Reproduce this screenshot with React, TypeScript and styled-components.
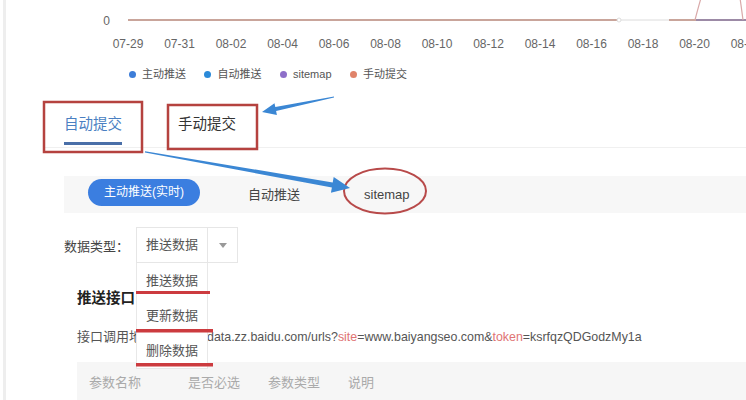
import styled, { createGlobalStyle } from "styled-components"

const GlobalStyle = createGlobalStyle`
  body {
    margin: 0;
    background: #fff;
    font-family: "Liberation Sans", "Noto Sans CJK SC", sans-serif;
  }
`

const Page = styled.div`
  position: relative;
  width: 746px;
  height: 400px;
  overflow: hidden;
  background: #fff;
`

const Frame = styled.div`
  margin-left: 3px;
  border-left: 3px solid #eeeeee;
  height: 400px;
  box-sizing: border-box;
`

const ChartRow = styled.div`
  display: flex;
  height: 28px;
`

const YAxis = styled.div`
  width: 122px;
  flex-shrink: 0;
  box-sizing: border-box;
  padding: 13px 18px 0 0;
  text-align: right;
  font-size: 12px;
  line-height: 16px;
  color: #666;
`

const AxisRow = styled.div`
  display: flex;
  margin-top: 8px;
  padding-left: 96.25px;
  overflow: hidden;
  white-space: nowrap;
`

const AxisTick = styled.div`
  flex-shrink: 0;
  width: 51.5px;
  text-align: center;
  font-size: 12px;
  line-height: 16px;
  color: #666;
`

const Legend = styled.div`
  display: flex;
  gap: 18px;
  margin-top: 14px;
  padding-left: 122.5px;
  font-size: 11px;
  line-height: 16px;
  color: #555;
`

const LegendItem = styled.div`
  display: flex;
  align-items: center;
  gap: 6.5px;
`

const Dot = styled.span<{ $color: string }>`
  width: 7px;
  height: 7px;
  border-radius: 50%;
  background: ${(p) => p.$color};
`

const TabBar = styled.div`
  display: flex;
  gap: 56px;
  margin: 32px 0 0 38px;
  padding: 0 0 2px 20px;
  border-bottom: 1px solid #f0f0f0;
`

const Tab = styled.div<{ $active?: boolean }>`
  font-size: 14.5px;
  line-height: 20px;
  padding-bottom: 8px;
  color: ${(p) => (p.$active ? "#4a7fc2" : "#333")};
  border-bottom: 3px solid ${(p) => (p.$active ? "#4a6fa8" : "transparent")};
`

const SubBar = styled.div`
  display: flex;
  align-items: center;
  gap: 32px;
  height: 37px;
  margin: 28px 0 0 58px;
  padding-left: 24px;
  background: #f7f7f7;
`

const SubTab = styled.div<{ $active?: boolean }>`
  height: 27px;
  padding: 0 16px;
  border-radius: 14px;
  line-height: 27px;
  font-size: ${(p) => (p.$active ? "12px" : "13px")};
  color: ${(p) => (p.$active ? "#fff" : "#444")};
  background: ${(p) => (p.$active ? "#3b7ee0" : "transparent")};
  margin-top: ${(p) => (p.$active ? "-5px" : "0")};
`

const FormRow = styled.div`
  display: flex;
  align-items: center;
  margin: 14px 0 0 58px;
`

const FieldLabel = styled.div`
  width: 72px;
  font-size: 13px;
  color: #444;
`

const Select = styled.div`
  position: relative;
  display: flex;
  width: 102px;
  height: 36px;
  box-sizing: border-box;
  border: 1px solid #e6e6e6;
`

const SelectValue = styled.div`
  width: 70px;
  padding-left: 9px;
  box-sizing: border-box;
  font-size: 13px;
  line-height: 34px;
  color: #555;
`

const CaretBox = styled.div`
  flex: 1;
  display: flex;
  align-items: center;
  justify-content: center;
  border-left: 1px solid #e6e6e6;
`

const Caret = styled.span`
  width: 0;
  height: 0;
  border-left: 4px solid transparent;
  border-right: 4px solid transparent;
  border-top: 5px solid #999;
`

const Menu = styled.div`
  position: absolute;
  top: 35px;
  left: -1px;
  width: 72px;
  box-sizing: border-box;
  background: #fff;
  border: 1px solid #e8e8e8;
  border-top: none;
  z-index: 2;
`

const MenuItem = styled.div`
  height: 35px;
  padding-left: 9px;
  font-size: 13px;
  line-height: 35px;
  color: #555;
`

const Section = styled.div`
  margin-left: 71px;
`

const Title = styled.div`
  margin-top: 24px;
  font-size: 14.5px;
  font-weight: bold;
  line-height: 22px;
  color: #222;
`

const UrlLine = styled.div`
  margin-top: 18px;
  font-size: 13px;
  line-height: 20px;
  color: #555;
  white-space: nowrap;
`

const UrlLabel = styled.span`
  margin-right: 8px;
`

const Url = styled.span`
  font-size: 12.4px;
`

const Param = styled.span`
  color: #e07474;
`

const TableHead = styled.div`
  display: grid;
  grid-template-columns: 99px 80px 80px 1fr;
  align-items: center;
  height: 38px;
  margin-top: 15px;
  padding-left: 12px;
  background: #f6f6f6;
  font-size: 13px;
  color: #aaa;
`

const Overlay = styled.svg`
  position: absolute;
  top: 0;
  left: 0;
  z-index: 5;
  pointer-events: none;
`

const ticks = ["07-29", "07-31", "08-02", "08-04", "08-06", "08-08", "08-10", "08-12", "08-14", "08-16", "08-18", "08-20", "08-22"]

const legend = [
  { label: "主动推送", color: "#3d7dd8" },
  { label: "自动推送", color: "#2b8ad9" },
  { label: "sitemap", color: "#8e6fc9" },
  { label: "手动提交", color: "#e0836a" },
]

function Plot() {
  return (
    <svg width="618" height="28" viewBox="0 0 618 28">
      <line x1="0" y1="20" x2="490" y2="20" stroke="#c9a59b" strokeWidth="2" />
      <line x1="490" y1="20" x2="541" y2="20" stroke="#dcdcdc" strokeWidth="1" />
      <circle cx="491" cy="20" r="2" fill="#fff" stroke="#ddd" strokeWidth="1" />
      <line x1="541" y1="20" x2="568" y2="20" stroke="#c9a59b" strokeWidth="2" />
      <line x1="568" y1="20" x2="618" y2="20" stroke="#9c8aa6" strokeWidth="2" />
      <path d="M567 20 C569 12 571 5 573 -2" stroke="#d9a9a9" strokeWidth="1.2" fill="none" />
      <path d="M615 20 C614 12 613 5 612 -2" stroke="#d9a9a9" strokeWidth="1.2" fill="none" />
    </svg>
  )
}

function Annotations() {
  return (
    <Overlay width="746" height="400" viewBox="0 0 746 400">
      <rect x="44" y="102" width="98" height="50" fill="none" stroke="#b5423f" strokeWidth="2.5" />
      <rect x="168" y="105" width="89" height="44" fill="none" stroke="#b5423f" strokeWidth="2.5" />
      <ellipse cx="385" cy="191" rx="41" ry="22.5" fill="none" stroke="#b84a4a" strokeWidth="2" />
      <polygon
        points="334,96.4 275.3,107.1 274.5,103.2 262,112 276.9,115 276.1,111.1 334,97.6"
        fill="#3b87d4"
      />
      <polygon
        points="144.9,152.6 331.9,187.4 330.9,192.8 350,188 333.7,177 332.7,182.4 145.1,151.2"
        fill="#3b87d4"
      />
      <rect x="136" y="291" width="74" height="3" fill="#cc3b3f" />
      <rect x="136" y="329" width="77" height="3.5" fill="#cc3b3f" />
      <rect x="136" y="363" width="77" height="3.5" fill="#cc3b3f" />
    </Overlay>
  )
}

export default function App() {
  return (
    <Page>
      <GlobalStyle />
      <Frame>
        <ChartRow>
          <YAxis>0</YAxis>
          <Plot />
        </ChartRow>
        <AxisRow>
          {ticks.map((t) => (
            <AxisTick key={t}>{t}</AxisTick>
          ))}
        </AxisRow>
        <Legend>
          {legend.map((l) => (
            <LegendItem key={l.label}>
              <Dot $color={l.color} />
              {l.label}
            </LegendItem>
          ))}
        </Legend>
        <TabBar>
          <Tab $active>自动提交</Tab>
          <Tab>手动提交</Tab>
        </TabBar>
        <SubBar>
          <SubTab $active>主动推送(实时)</SubTab>
          <SubTab>自动推送</SubTab>
          <SubTab>sitemap</SubTab>
        </SubBar>
        <FormRow>
          <FieldLabel>数据类型：</FieldLabel>
          <Select>
            <SelectValue>推送数据</SelectValue>
            <CaretBox>
              <Caret />
            </CaretBox>
            <Menu>
              <MenuItem>推送数据</MenuItem>
              <MenuItem>更新数据</MenuItem>
              <MenuItem>删除数据</MenuItem>
            </Menu>
          </Select>
        </FormRow>
        <Section>
          <Title>推送接口</Title>
          <UrlLine>
            <UrlLabel>接口调用地址：</UrlLabel>
            <Url>
              http://data.zz.baidu.com/urls?<Param>site</Param>=www.baiyangseo.com&amp;<Param>token</Param>=ksrfqzQDGodzMy1a
            </Url>
          </UrlLine>
          <TableHead>
            <span>参数名称</span>
            <span>是否必选</span>
            <span>参数类型</span>
            <span>说明</span>
          </TableHead>
        </Section>
      </Frame>
      <Annotations />
    </Page>
  )
}
